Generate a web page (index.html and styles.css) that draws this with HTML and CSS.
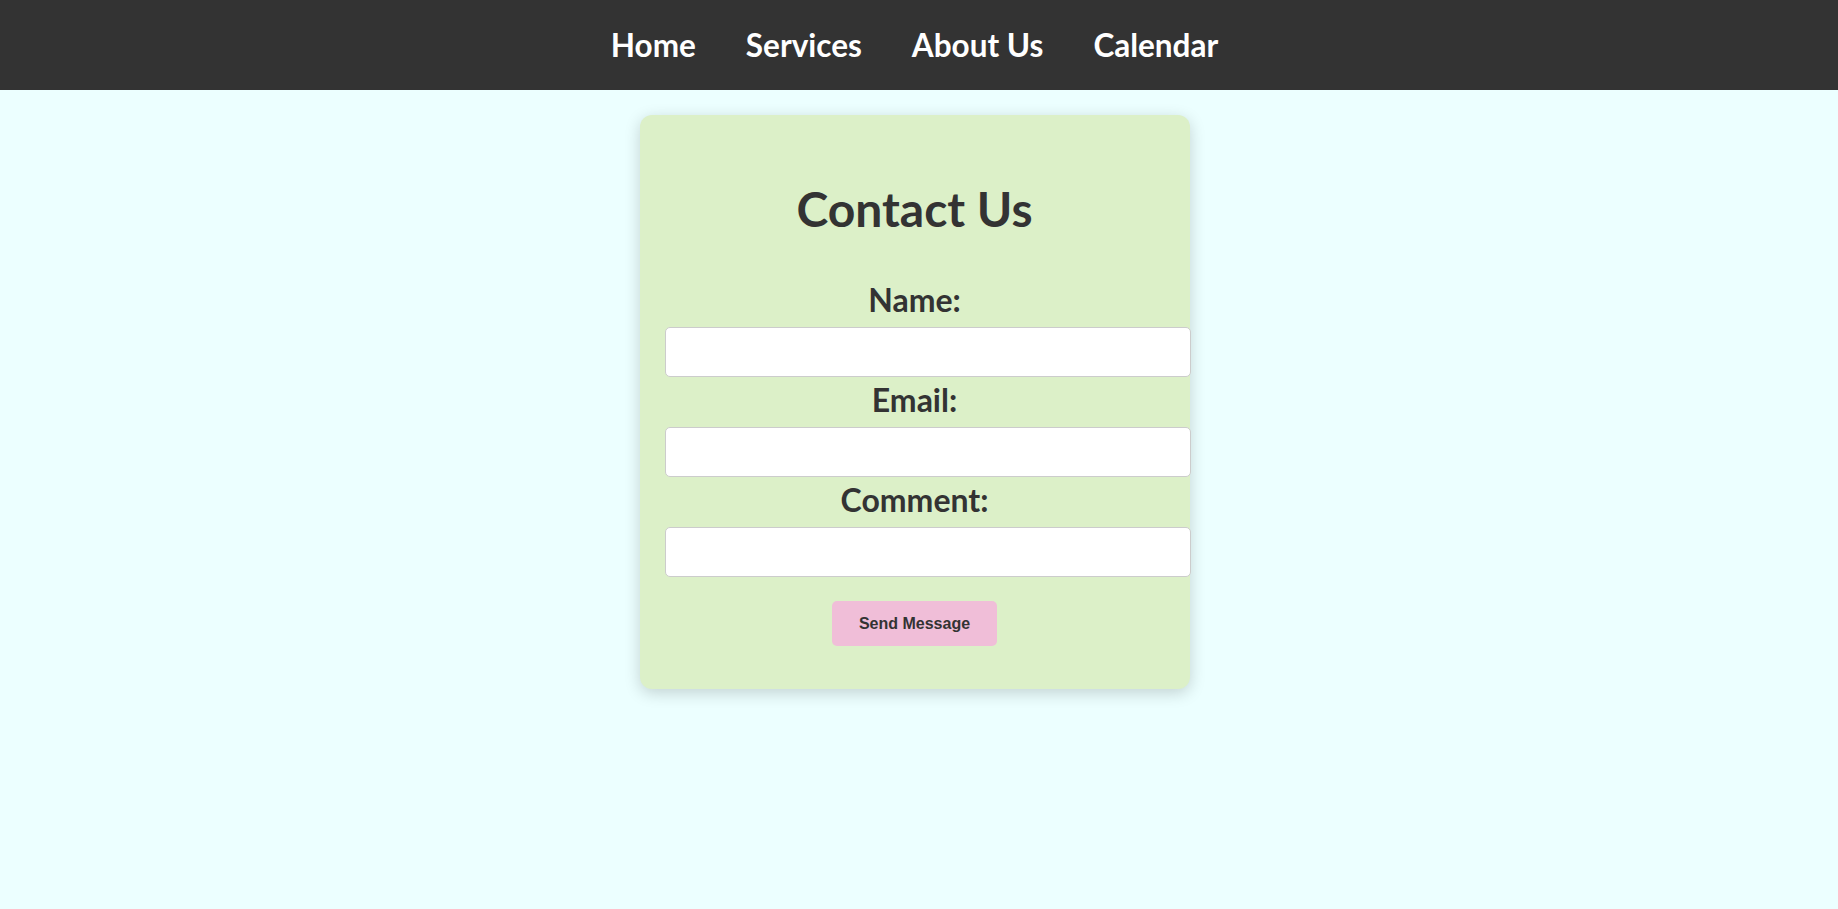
FILE: index.html
```html
<!DOCTYPE html>
<html lang="en">
<head>
<meta charset="utf-8">
<title>Contact Us</title>
<link rel="stylesheet" href="styles.css">
</head>
<body>
<nav class="topnav">
  <a class="nav-link" href="#">Home</a>
  <a class="nav-link" href="#">Services</a>
  <a class="nav-link" href="#">About Us</a>
  <a class="nav-link" href="#">Calendar</a>
</nav>
<main class="page">
  <section class="card">
    <h1 class="title">Contact Us</h1>
    <form class="form">
      <label class="label" for="name">Name:</label>
      <input class="field" type="text" id="name">
      <label class="label" for="email">Email:</label>
      <input class="field" type="email" id="email">
      <label class="label" for="comment">Comment:</label>
      <input class="field" type="text" id="comment">
      <button class="send" type="button">Send Message</button>
    </form>
  </section>
</main>
</body>
</html>
```
FILE: styles.css
```css
html, body {
  margin: 0;
  padding: 0;
}
body {
  background: #ecffff;
  font-family: "Lato", "DejaVu Sans", sans-serif;
  color: #333333;
  min-height: 909px;
}
.topnav {
  height: 90px;
  background: #333333;
  display: flex;
  justify-content: center;
  align-items: center;
  gap: 50px;
  padding-right: 9px;
}
.nav-link {
  color: #ffffff;
  text-decoration: none;
  font-weight: 700;
  font-size: 31.5px;
  line-height: 40px;
}
.page {
  display: flex;
  justify-content: center;
  padding-top: 25px;
  padding-right: 9px;
}
.card {
  width: 500px;
  padding: 25px;
  background: #dcf0c8;
  border-radius: 12px;
  box-shadow: 0 4px 16px rgba(0, 0, 0, 0.18);
}
.title {
  margin: 40px 0 42px;
  font-size: 48px;
  line-height: 58px;
  font-weight: 700;
  text-align: center;
  color: #333333;
}
.form {
  text-align: center;
}
.label {
  display: block;
  font-size: 32px;
  line-height: 40px;
  font-weight: 700;
  margin-bottom: 7px;
  color: #333333;
}
.field {
  display: block;
  box-sizing: content-box;
  width: 100%;
  height: 24px;
  padding: 12px;
  margin: 0 0 3px;
  border: 1px solid #cccccc;
  border-radius: 5px;
  background: #ffffff;
  font-size: 16px;
}
.send {
  display: inline-block;
  margin: 21px 0 18px;
  height: 45px;
  padding: 0 27px;
  border: none;
  border-radius: 5px;
  background: #f0bed8;
  color: #333333;
  font-family: "Liberation Sans", Arial, sans-serif;
  font-weight: 700;
  font-size: 16px;
}
```
